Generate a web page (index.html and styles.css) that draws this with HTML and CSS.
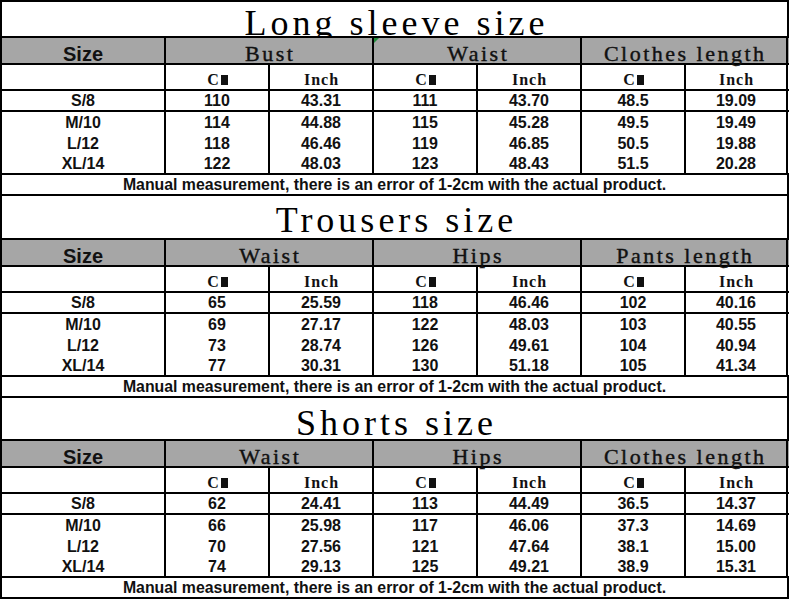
FILE: index.html
```html
<!DOCTYPE html>
<html>
<head>
<meta charset="utf-8">
<link rel="stylesheet" href="styles.css">
</head>
<body>
<div class="page">
  <section class="sheet">
    <div class="title first"><span class="tt">Long sleeve size</span></div>
    <div class="row head">
      <div class="c size">Size</div>
      <div class="c span2"><span class="ht">Bust</span></div>
      <div class="c span2"><i class="mark"></i><span class="ht">Waist</span></div>
      <div class="c span2"><span class="ht">Clothes length</span></div>
    </div>
    <div class="row sub">
      <div class="c"></div>
      <div class="c"><span class="ut">C<i class="tofu"></i></span></div>
      <div class="c"><span class="ut">Inch</span></div>
      <div class="c"><span class="ut">C<i class="tofu"></i></span></div>
      <div class="c"><span class="ut">Inch</span></div>
      <div class="c"><span class="ut">C<i class="tofu"></i></span></div>
      <div class="c"><span class="ut">Inch</span></div>
    </div>
    <div class="row data line"><div class="c">S/8</div><div class="c">110</div><div class="c">43.31</div><div class="c">111</div><div class="c">43.70</div><div class="c">48.5</div><div class="c">19.09</div></div>
    <div class="row data"><div class="c">M/10</div><div class="c">114</div><div class="c">44.88</div><div class="c">115</div><div class="c">45.28</div><div class="c">49.5</div><div class="c">19.49</div></div>
    <div class="row data"><div class="c">L/12</div><div class="c">118</div><div class="c">46.46</div><div class="c">119</div><div class="c">46.85</div><div class="c">50.5</div><div class="c">19.88</div></div>
    <div class="row data line"><div class="c">XL/14</div><div class="c">122</div><div class="c">48.03</div><div class="c">123</div><div class="c">48.43</div><div class="c">51.5</div><div class="c">20.28</div></div>
    <div class="note">Manual measurement, there is an error of 1-2cm with the actual product.</div>
  </section>

  <section class="sheet">
    <div class="title mid"><span class="tt">Trousers size</span></div>
    <div class="row head">
      <div class="c size">Size</div>
      <div class="c span2"><span class="ht">Waist</span></div>
      <div class="c span2"><span class="ht">Hips</span></div>
      <div class="c span2"><span class="ht">Pants length</span></div>
    </div>
    <div class="row sub">
      <div class="c"></div>
      <div class="c"><span class="ut">C<i class="tofu"></i></span></div>
      <div class="c"><span class="ut">Inch</span></div>
      <div class="c"><span class="ut">C<i class="tofu"></i></span></div>
      <div class="c"><span class="ut">Inch</span></div>
      <div class="c"><span class="ut">C<i class="tofu"></i></span></div>
      <div class="c"><span class="ut">Inch</span></div>
    </div>
    <div class="row data line"><div class="c">S/8</div><div class="c">65</div><div class="c">25.59</div><div class="c">118</div><div class="c">46.46</div><div class="c">102</div><div class="c">40.16</div></div>
    <div class="row data"><div class="c">M/10</div><div class="c">69</div><div class="c">27.17</div><div class="c">122</div><div class="c">48.03</div><div class="c">103</div><div class="c">40.55</div></div>
    <div class="row data"><div class="c">L/12</div><div class="c">73</div><div class="c">28.74</div><div class="c">126</div><div class="c">49.61</div><div class="c">104</div><div class="c">40.94</div></div>
    <div class="row data line"><div class="c">XL/14</div><div class="c">77</div><div class="c">30.31</div><div class="c">130</div><div class="c">51.18</div><div class="c">105</div><div class="c">41.34</div></div>
    <div class="note">Manual measurement, there is an error of 1-2cm with the actual product.</div>
  </section>

  <section class="sheet">
    <div class="title last"><span class="tt">Shorts size</span></div>
    <div class="row head">
      <div class="c size">Size</div>
      <div class="c span2"><span class="ht">Waist</span></div>
      <div class="c span2"><span class="ht">Hips</span></div>
      <div class="c span2"><span class="ht">Clothes length</span></div>
    </div>
    <div class="row sub">
      <div class="c"></div>
      <div class="c"><span class="ut">C<i class="tofu"></i></span></div>
      <div class="c"><span class="ut">Inch</span></div>
      <div class="c"><span class="ut">C<i class="tofu"></i></span></div>
      <div class="c"><span class="ut">Inch</span></div>
      <div class="c"><span class="ut">C<i class="tofu"></i></span></div>
      <div class="c"><span class="ut">Inch</span></div>
    </div>
    <div class="row data line"><div class="c">S/8</div><div class="c">62</div><div class="c">24.41</div><div class="c">113</div><div class="c">44.49</div><div class="c">36.5</div><div class="c">14.37</div></div>
    <div class="row data"><div class="c">M/10</div><div class="c">66</div><div class="c">25.98</div><div class="c">117</div><div class="c">46.06</div><div class="c">37.3</div><div class="c">14.69</div></div>
    <div class="row data"><div class="c">L/12</div><div class="c">70</div><div class="c">27.56</div><div class="c">121</div><div class="c">47.64</div><div class="c">38.1</div><div class="c">15.00</div></div>
    <div class="row data line"><div class="c">XL/14</div><div class="c">74</div><div class="c">29.13</div><div class="c">125</div><div class="c">49.21</div><div class="c">38.9</div><div class="c">15.31</div></div>
    <div class="note">Manual measurement, there is an error of 1-2cm with the actual product.</div>
  </section>
</div>
</body>
</html>
```

FILE: styles.css
```css
html, body {
  margin: 0;
  padding: 0;
  background: #ffffff;
}

.page {
  width: 789px;
  height: 600px;
  overflow: hidden;
}

.sheet {
  display: flex;
  flex-direction: column;
}

.title {
  box-sizing: border-box;
  height: 44px;
  border-left: 2px solid #000;
  border-right: 2px solid #000;
  border-bottom: 2px solid #000;
  text-align: center;
  font-family: "Liberation Serif", "Times New Roman", serif;
  font-size: 36px;
  line-height: 36px;
  letter-spacing: 4px;
  color: #000;
  padding-top: 6px;
  padding-left: 4px;
  white-space: nowrap;
}

.title.first {
  height: 38px;
  border-top: 2px solid #000;
  padding-top: 3px;
}

.title.last {
  height: 43px;
  padding-top: 7px;
}

.row {
  box-sizing: border-box;
  display: grid;
  grid-template-columns: 164px repeat(6, 104px);
  width: 789px;
}

.c {
  box-sizing: border-box;
  border-left: 2px solid #000;
  display: flex;
  align-items: center;
  justify-content: center;
  position: relative;
  white-space: nowrap;
}

.c:last-child {
  border-right: 2px solid #000;
}

.span2 {
  grid-column: span 2;
}

.head {
  height: 27px;
  background: #a6a6a6;
  border-bottom: 2px solid #000;
}

.head .c {
  align-items: flex-start;
  padding-top: 5px;
}

.head .c.size {
  padding-top: 6px;
}

.size {
  font-family: "Liberation Sans", Arial, sans-serif;
  font-weight: bold;
  font-size: 20px;
  line-height: 20px;
  color: #111;
}

.ht {
  display: block;
  font-family: "Liberation Serif", "Times New Roman", serif;
  font-size: 22px;
  line-height: 22px;
  letter-spacing: 2.5px;
  padding-left: 2.5px;
  color: #111;
  -webkit-text-stroke: 0.4px #111;
}

.mark {
  position: absolute;
  left: 0;
  top: 0;
  width: 0;
  height: 0;
  border-top: 5px solid #1f8a3b;
  border-right: 5px solid transparent;
}

.sub {
  height: 26px;
  border-bottom: 2px solid #000;
}

.sub .c {
  align-items: flex-start;
  padding-top: 7px;
}

.ut {
  display: block;
  font-family: "Liberation Serif", "Times New Roman", serif;
  font-weight: bold;
  font-size: 16px;
  line-height: 16px;
  letter-spacing: 1px;
  padding-left: 1px;
  color: #111;
}

.tofu {
  display: inline-block;
  width: 7px;
  height: 10px;
  margin-left: 1px;
  background: #111;
  vertical-align: baseline;
}

.data {
  height: 21px;
  font-family: "Liberation Sans", Arial, sans-serif;
  font-weight: bold;
  font-size: 16px;
  color: #111;
}

.data.line {
  border-bottom: 2px solid #000;
}

.note {
  box-sizing: border-box;
  height: 21px;
  border-left: 2px solid #000;
  border-right: 2px solid #000;
  border-bottom: 2px solid #000;
  font-family: "Liberation Sans", Arial, sans-serif;
  font-weight: bold;
  font-size: 15.85px;
  line-height: 19px;
  text-align: center;
  color: #111;
  white-space: nowrap;
}
```
